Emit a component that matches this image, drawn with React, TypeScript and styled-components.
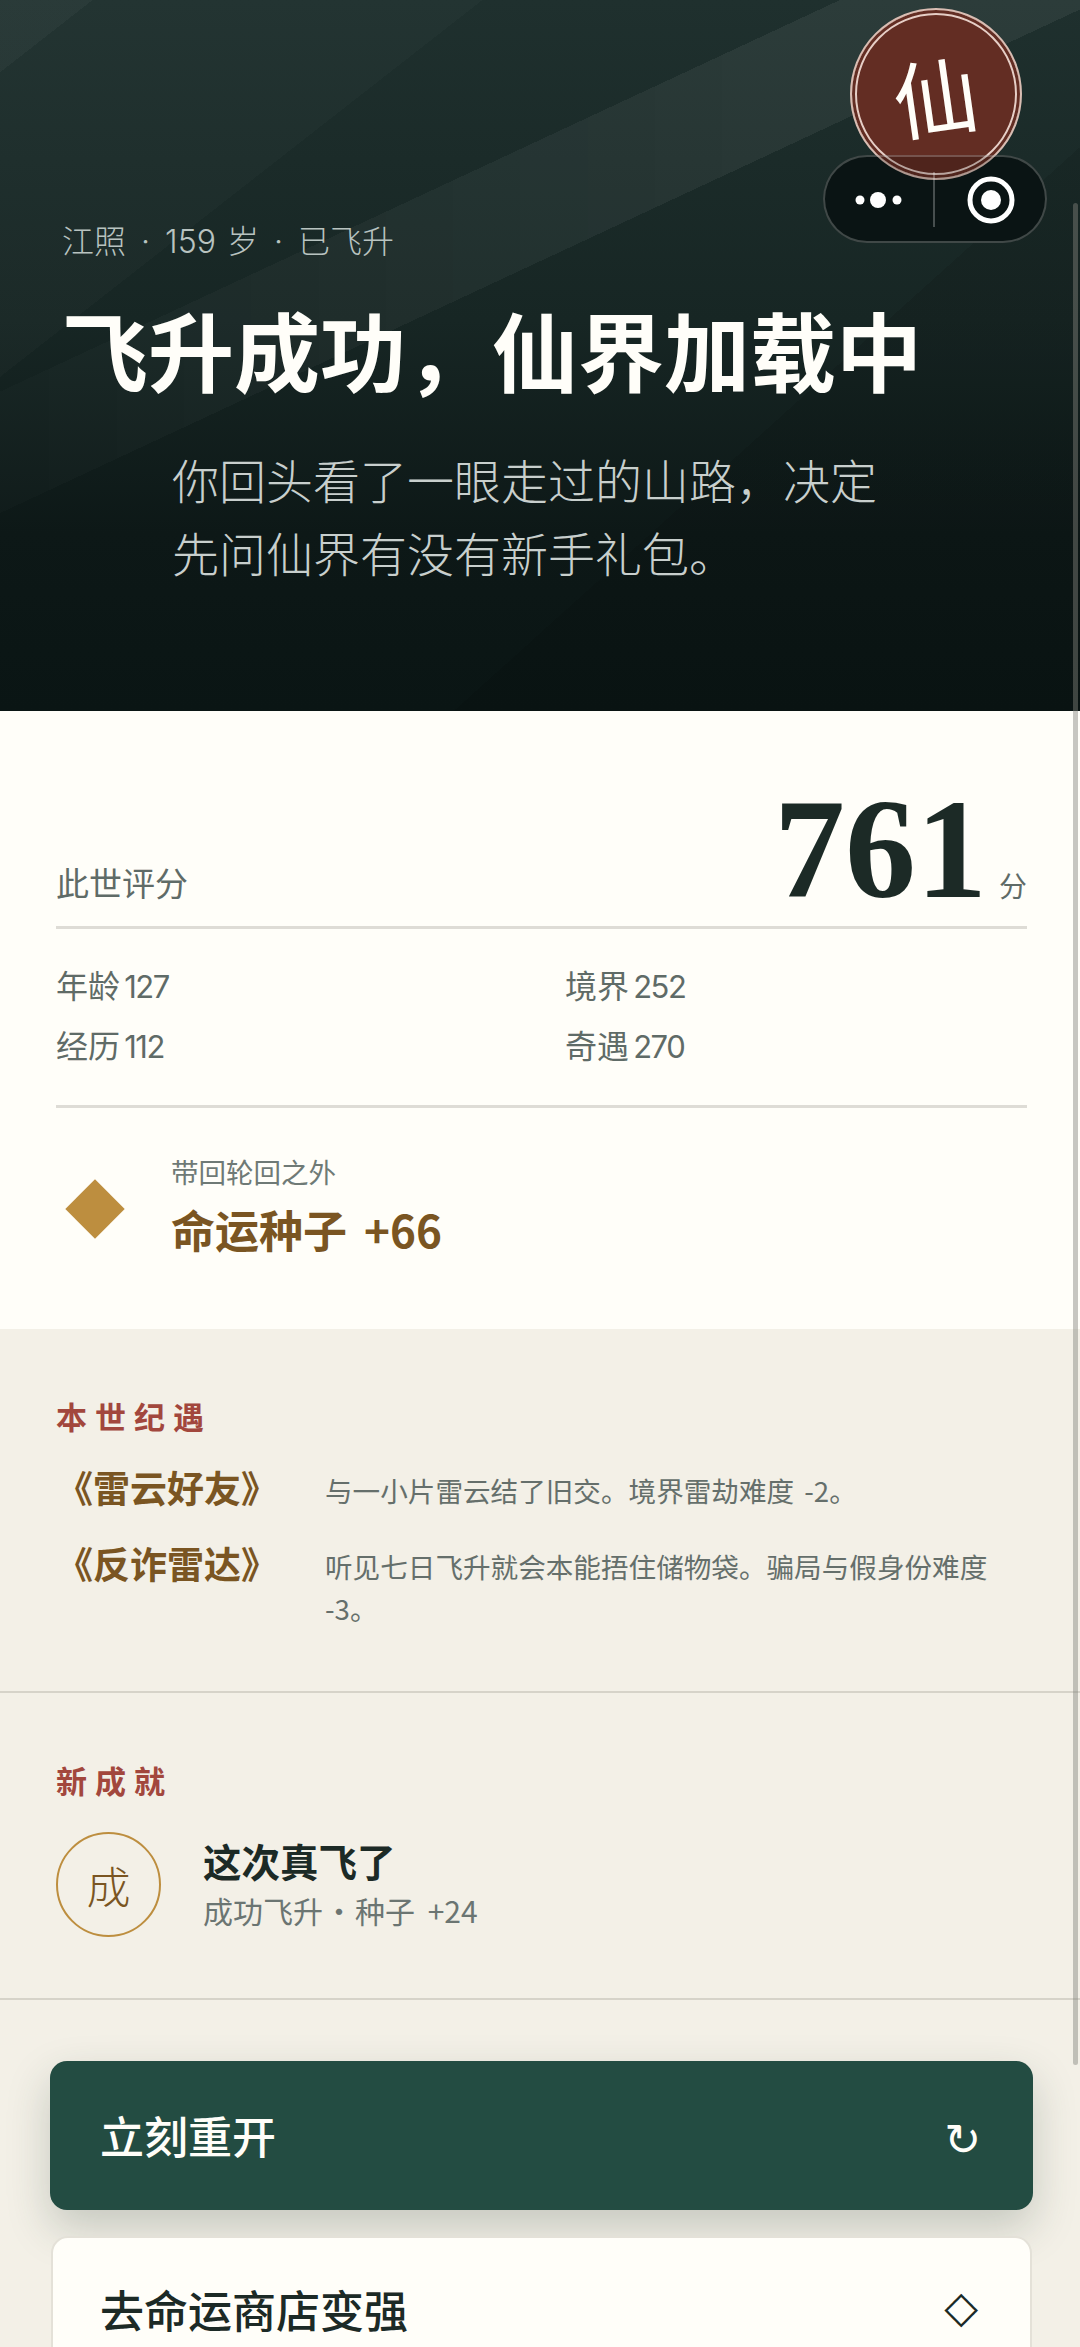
import React, {FC} from 'react';
import styled, {createGlobalStyle} from 'styled-components';

const SANS = `"Noto Sans CJK SC", "Noto Sans", sans-serif`;
const SERIF = `"Liberation Serif", "Noto Sans CJK SC", serif`;
const LATIN = `Inter, "Noto Sans CJK SC", sans-serif`;

const GlobalStyle = createGlobalStyle`
  html, body {
    margin: 0;
    padding: 0;
    height: 2347px;
    overflow: hidden;
    background: #f3f0e7;
  }
  * {
    box-sizing: border-box;
  }
`;

const Page = styled.div`
  position: relative;
  width: 1080px;
  height: 2347px;
  overflow: hidden;
  font-family: ${SANS};
  background: #f3f0e7;
`;

const Hero = styled.header`
  position: relative;
  height: 711px;
  padding: 220px 0 0 62px;
  background:
    linear-gradient(142deg, rgba(255, 255, 255, 0.05) 57px, rgba(255, 255, 255, 0.02) 57px, rgba(255, 255, 255, 0.02) 297px, transparent 297px),
    linear-gradient(138deg, transparent 832px, rgba(0, 0, 0, 0.1) 832px),
    linear-gradient(180deg, #1f302e 0%, #172624 45%, #0d1817 75%, #0a1514 100%);

  &::before {
    content: "";
    position: absolute;
    inset: 0;
    background: linear-gradient(155deg, transparent 355px, rgba(255, 255, 255, 0.06) 355px, rgba(255, 255, 255, 0.06) 465px, transparent 465px);
    mask-image: linear-gradient(90deg, rgba(0, 0, 0, 0.25), #000 70%);
  }
`;

const HeroText = styled.div`
  position: relative;
`;

const Meta = styled.div`
  font-family: ${LATIN};
  font-size: 32px;
  line-height: 44px;
  font-weight: 300;
  word-spacing: 2px;
  color: #b8c3c0;
`;

const Dot = styled.span<{$gap: number}>`
  margin: 0 ${props => props.$gap}px;
`;

const Title = styled.h1`
  margin: 43px 0 0;
  font-family: ${SERIF};
  font-size: 86px;
  line-height: 100px;
  font-weight: 700;
  color: #fffef9;
  white-space: nowrap;
`;

const Lead = styled.p`
  margin: 40px 0 0 110px;
  width: 720px;
  font-family: ${SERIF};
  font-size: 47px;
  line-height: 73px;
  font-weight: 300;
  color: #c8cfcd;
`;

const CapsuleBase = styled.div`
  position: absolute;
  top: 155px;
  left: 823px;
  width: 224px;
  height: 88px;
  border-radius: 44px;
  background: #0d1a19;
`;

const Seal = styled.div`
  position: absolute;
  top: 8px;
  left: 850px;
  width: 172px;
  height: 172px;
  padding-top: 16px;
  border-radius: 50%;
  display: flex;
  align-items: center;
  justify-content: center;
  background: #632d23;
  border: 2px solid #d9bdb3;
  box-shadow: inset 0 0 0 3px #632d23, inset 0 0 0 5px #e6cec6;
`;

const SealGlyph = styled.span`
  font-family: ${SERIF};
  font-size: 84px;
  line-height: 1;
  color: #fffef9;
  transform: rotate(-8deg);
`;

const Capsule = styled.div`
  position: absolute;
  top: 155px;
  left: 823px;
  width: 224px;
  height: 88px;
  border-radius: 44px;
  background: rgba(0, 0, 0, 0.2);
  border: 2px solid rgba(255, 255, 255, 0.22);
`;

const CapsuleIcon = styled.svg`
  position: absolute;
  top: -2px;
  left: -2px;
`;

const ScrollThumb = styled.div`
  position: absolute;
  top: 203px;
  right: 2px;
  width: 5px;
  height: 1862px;
  border-radius: 3px;
  background: rgba(130, 130, 125, 0.45);
`;

const ScoreCard = styled.section`
  height: 618px;
  padding: 0 53px 0 56px;
  background: #fffef9;
`;

const ScoreHead = styled.div`
  height: 218px;
  display: flex;
  align-items: flex-end;
  justify-content: space-between;
  border-bottom: 3px solid #dedcd6;
`;

const ScoreLabel = styled.span`
  font-size: 33px;
  line-height: 48px;
  color: #5f6b67;
  margin-bottom: 20px;
`;

const ScoreValue = styled.div`
  display: flex;
  align-items: baseline;
  gap: 12px;
  color: #5f6b67;
  font-size: 28px;
  margin-bottom: 2px;
`;

const ScoreNumber = styled.span`
  font-family: ${SERIF};
  font-size: 142px;
  line-height: 150px;
  font-weight: 700;
  color: #1c2a26;
`;

const StatGrid = styled.div`
  display: grid;
  grid-template-columns: 509px 1fr;
  grid-auto-rows: 60px;
  align-items: center;
  padding: 26px 0 0;
  height: 179px;
  border-bottom: 3px solid #dedcd6;
`;

const Stat = styled.div`
  font-size: 32px;
  line-height: 44px;
  word-spacing: -3px;
  color: #5f6b67;
`;

const StatNumber = styled.span`
  font-family: Inter, sans-serif;
  font-size: 31px;
  font-weight: 400;
  letter-spacing: -1.5px;
`;

const Reward = styled.div`
  display: flex;
  align-items: center;
  padding-top: 43px;
`;

const Diamond = styled.div`
  width: 42px;
  height: 42px;
  margin: 8px 55px 0 18px;
  flex: none;
  background: #bd8e3f;
  transform: rotate(45deg);
`;

const RewardLabel = styled.div`
  font-size: 27.5px;
  line-height: 40px;
  color: #6f7a76;
`;

const RewardValue = styled.div`
  margin-top: 8px;
  font-size: 44px;
  line-height: 60px;
  font-weight: 600;
  word-spacing: 7px;
  color: #7a5522;
`;

const Block = styled.section<{$height: number}>`
  height: ${props => props.$height}px;
  padding: 65px 56px 0;
  border-bottom: 2px solid #d6d3c9;
`;

const BlockTitle = styled.h2`
  margin: 0;
  font-size: 31px;
  line-height: 44px;
  font-weight: 600;
  letter-spacing: 8px;
  color: #a2473d;
`;

const ChronicleList = styled.div`
  margin-top: 24px;
`;

const Chronicle = styled.div`
  display: grid;
  grid-template-columns: 269px 1fr;
  min-height: 76px;
`;

const ChronicleName = styled.div`
  font-size: 37px;
  line-height: 50px;
  font-weight: 600;
  color: #7a5522;
`;

const ChronicleText = styled.div`
  padding-top: 7px;
  padding-right: 30px;
  font-size: 27.6px;
  line-height: 42px;
  word-spacing: 4px;
  color: #656f6b;
`;

const Achievement = styled.div`
  display: flex;
  align-items: center;
  gap: 42px;
  margin-top: 30px;
`;

const AchievementMark = styled.div`
  width: 105px;
  height: 105px;
  flex: none;
  display: flex;
  align-items: center;
  justify-content: center;
  border-radius: 50%;
  border: 2.5px solid #bd8e3f;
  font-family: ${SERIF};
  font-size: 44px;
  font-weight: 300;
  color: #7a5522;
`;

const AchievementBody = styled.div`
  margin-bottom: 5px;
`;

const AchievementName = styled.div`
  font-size: 38.5px;
  line-height: 54px;
  font-weight: 600;
  color: #1c2a26;
`;

const AchievementNote = styled.div`
  margin-top: 1px;
  font-size: 30px;
  line-height: 44px;
  word-spacing: 6px;
  color: #6b7572;
`;

const Actions = styled.div`
  display: flex;
  flex-direction: column;
  gap: 26px;
  padding: 61px 47px 0 50px;
`;

const PrimaryButton = styled.button`
  height: 149px;
  padding: 0 52px 2px 50px;
  display: flex;
  align-items: center;
  justify-content: space-between;
  border: 0;
  border-radius: 17px;
  font-family: ${SANS};
  font-size: 44px;
  font-weight: 500;
  color: #fffef9;
  background: #234c42;
  box-shadow: 0 18px 44px rgba(35, 60, 50, 0.22);
`;

const SecondaryButton = styled.button`
  height: 149px;
  margin: 0 1px;
  padding: 0 52px 4px 47px;
  display: flex;
  align-items: center;
  justify-content: space-between;
  border: 2px solid #e4e1d8;
  border-radius: 17px;
  font-family: ${SANS};
  font-size: 44px;
  font-weight: 500;
  color: #1c2a26;
  background: #fffef9;
`;

const ButtonGlyph = styled.span<{$drop: number}>`
  margin-top: ${props => props.$drop}px;
  font-family: "DejaVu Sans", sans-serif;
  font-size: 44px;
  line-height: 1;
  font-weight: 400;
`;

const App: FC = () => {
    return (
        <Page>
            <GlobalStyle/>
            <Hero>
                <HeroText>
                    <Meta>江照<Dot $gap={15}>·</Dot>159 岁<Dot $gap={15}>·</Dot>已飞升</Meta>
                    <Title>飞升成功，仙界加载中</Title>
                    <Lead>你回头看了一眼走过的山路，决定先问仙界有没有新手礼包。</Lead>
                </HeroText>
            </Hero>
            <CapsuleBase/>
            <Seal><SealGlyph>仙</SealGlyph></Seal>
            <Capsule>
                <CapsuleIcon width="224" height="88" viewBox="0 0 224 88" fill="none">
                    <circle cx="37" cy="45" r="4.5" fill="#fff"/>
                    <circle cx="55" cy="45" r="8" fill="#fff"/>
                    <circle cx="74" cy="45" r="4.5" fill="#fff"/>
                    <line x1="111" y1="17" x2="111" y2="72" stroke="rgba(255,255,255,0.25)" strokeWidth="2"/>
                    <circle cx="168" cy="45" r="21" stroke="#fff" strokeWidth="5"/>
                    <circle cx="168" cy="45" r="10" fill="#fff"/>
                </CapsuleIcon>
            </Capsule>
            <ScoreCard>
                <ScoreHead>
                    <ScoreLabel>此世评分</ScoreLabel>
                    <ScoreValue><ScoreNumber>761</ScoreNumber>分</ScoreValue>
                </ScoreHead>
                <StatGrid>
                    <Stat>年龄 <StatNumber>127</StatNumber></Stat>
                    <Stat>境界 <StatNumber>252</StatNumber></Stat>
                    <Stat>经历 <StatNumber>112</StatNumber></Stat>
                    <Stat>奇遇 <StatNumber>270</StatNumber></Stat>
                </StatGrid>
                <Reward>
                    <Diamond/>
                    <div>
                        <RewardLabel>带回轮回之外</RewardLabel>
                        <RewardValue>命运种子 +66</RewardValue>
                    </div>
                </Reward>
            </ScoreCard>
            <Block $height={364}>
                <BlockTitle>本世纪遇</BlockTitle>
                <ChronicleList>
                    <Chronicle>
                        <ChronicleName>《雷云好友》</ChronicleName>
                        <ChronicleText>与一小片雷云结了旧交。境界雷劫难度 -2。</ChronicleText>
                    </Chronicle>
                    <Chronicle>
                        <ChronicleName>《反诈雷达》</ChronicleName>
                        <ChronicleText>听见七日飞升就会本能捂住储物袋。骗局与假身份难度 -3。</ChronicleText>
                    </Chronicle>
                </ChronicleList>
            </Block>
            <Block $height={307}>
                <BlockTitle>新成就</BlockTitle>
                <Achievement>
                    <AchievementMark>成</AchievementMark>
                    <AchievementBody>
                        <AchievementName>这次真飞了</AchievementName>
                        <AchievementNote>成功飞升<Dot $gap={1}>·</Dot>种子 +24</AchievementNote>
                    </AchievementBody>
                </Achievement>
            </Block>
            <Actions>
                <PrimaryButton>立刻重开<ButtonGlyph $drop={10}>↻</ButtonGlyph></PrimaryButton>
                <SecondaryButton>去命运商店变强<ButtonGlyph $drop={-4}>◇</ButtonGlyph></SecondaryButton>
            </Actions>
            <ScrollThumb/>
        </Page>
    );
};

export default App;
